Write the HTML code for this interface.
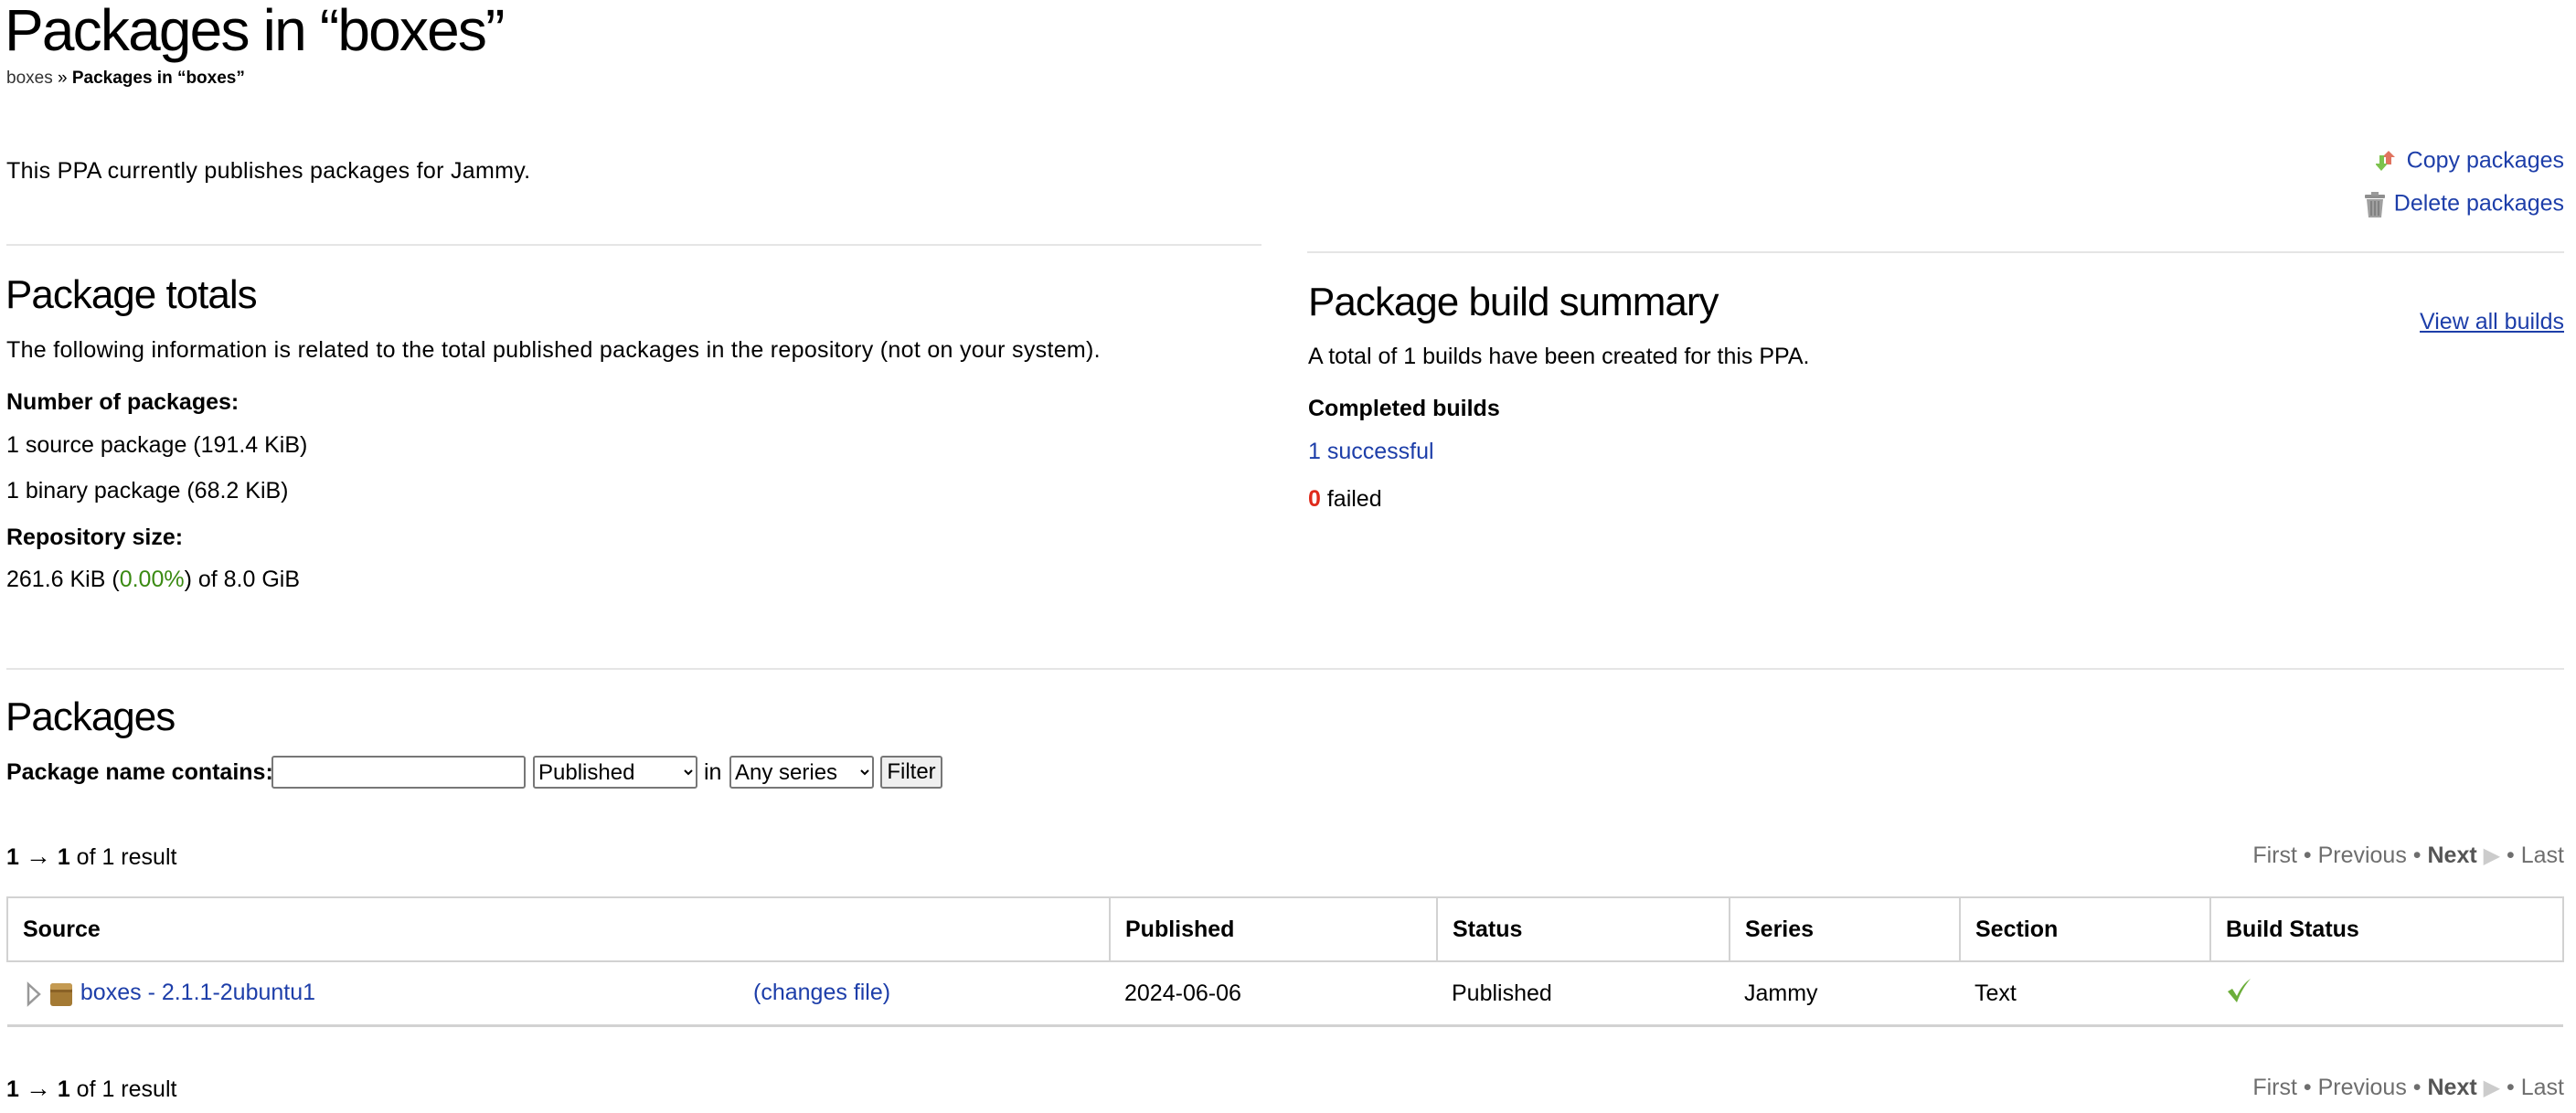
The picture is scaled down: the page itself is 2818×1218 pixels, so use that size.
<!DOCTYPE html>
<html><head><meta charset="utf-8"><style>
body{margin:0;width:2818px;height:1218px;background:#fff;font-family:"Liberation Sans",sans-serif;color:#000;position:relative;overflow:hidden}
.a{position:absolute;white-space:nowrap;font-size:25px;line-height:25px}
.b{font-weight:bold}
.l{color:#1d3ea9}
.h2{font-size:44px;line-height:45px;font-weight:300;letter-spacing:-1px}
.hr{position:absolute;height:2px;background:#e5e5e5}
.g{color:#6e6e6e}
table{position:absolute;left:7px;top:981px;width:2798px;border-collapse:collapse;font-size:25px}
th{text-align:left;height:68px;border:2px solid #d2d2d2;padding:0 0 0 16px;font-weight:bold}
td{height:68px;padding:0 0 0 16px;border-bottom:3px solid #d2d2d2}
input,select,button{font-family:"Liberation Sans",sans-serif;font-size:24px}
.ar{font-size:30px}
</style></head><body>
<div class="a" style="left:5px;top:1px;font-size:64px;line-height:65px;letter-spacing:-1.8px">Packages in “boxes”</div>
<div class="a" style="left:7px;top:76px;font-size:19px;line-height:20px"><span style="color:#333">boxes</span> » <b>Packages in “boxes”</b></div>
<div class="a" style="left:7px;top:175px;letter-spacing:0.3px">This PPA currently publishes packages for Jammy.</div>

<div class="a l" style="right:13px;top:163px"><svg width="26" height="28" viewBox="0 0 26 28" style="vertical-align:middle;margin-right:8px"><path d="M14 2l7 7h-4v8h-6V9H7z" fill="#e0735f"/><path d="M4 7h5v9h4l-7 8-7-8h5z" fill="#7cc24d"/></svg>Copy packages</div>
<div class="a l" style="right:13px;top:209px"><svg width="26" height="30" viewBox="0 0 26 30" style="vertical-align:middle;margin-right:8px"><rect x="2" y="4" width="22" height="4" rx="1" fill="#8f8f8f"/><rect x="9" y="1" width="8" height="4" fill="#9a9a9a"/><path d="M4 9h18l-2 20H6z" fill="#a0a0a0"/><path d="M9 11v16M13 11v16M17 11v16" stroke="#777" stroke-width="1.5"/></svg>Delete packages</div>

<div class="hr" style="left:7px;top:267px;width:1373px"></div>
<div class="hr" style="left:1430px;top:275px;width:1375px"></div>

<div class="a h2" style="left:6px;top:300px">Package totals</div>
<div class="a" style="left:7px;top:371px;letter-spacing:0.3px">The following information is related to the total published packages in the repository (not on your system).</div>
<div class="a b" style="left:7px;top:428px">Number of packages:</div>
<div class="a" style="left:7px;top:475px">1 source package (191.4 KiB)</div>
<div class="a" style="left:7px;top:525px">1 binary package (68.2 KiB)</div>
<div class="a b" style="left:7px;top:576px">Repository size:</div>
<div class="a" style="left:7px;top:622px">261.6 KiB (<span style="color:#3a8a12">0.00%</span>) of 8.0 GiB</div>

<div class="a h2" style="left:1431px;top:308px">Package build summary</div>
<div class="a l" style="right:13px;top:340px;text-decoration:underline">View all builds</div>
<div class="a" style="left:1431px;top:378px">A total of 1 builds have been created for this PPA.</div>
<div class="a b" style="left:1431px;top:435px">Completed builds</div>
<div class="a l" style="left:1431px;top:482px">1 successful</div>
<div class="a" style="left:1431px;top:534px"><b style="color:#df2a1b">0</b> failed</div>

<div class="hr" style="left:7px;top:731px;width:2798px"></div>
<div class="a h2" style="left:6px;top:762px">Packages</div>
<div class="a b" style="left:7px;top:833px">Package name contains:</div>
<input style="position:absolute;left:297px;top:827px;width:278px;height:36px;box-sizing:border-box;border:2px solid #777;border-radius:3px">
<select style="position:absolute;left:583px;top:827px;width:180px;height:36px;border:2px solid #777;border-radius:3px;background:#fff"><option>Published</option></select>
<div class="a" style="left:770px;top:833px">in</div>
<select style="position:absolute;left:798px;top:827px;width:158px;height:36px;border:2px solid #777;border-radius:3px;background:#fff"><option>Any series</option></select>
<button style="position:absolute;left:963px;top:827px;width:68px;height:36px;border:2px solid #777;border-radius:3px;background:#efefef;padding:0">Filter</button>

<div class="a" style="left:7px;top:924px"><b>1</b> <span style="font-size:28px">→</span> <b>1</b> of 1 result</div>
<div class="a g" style="right:13px;top:924px">First • Previous • <b style="color:#555">Next</b> <span style="color:#ccc;font-size:24px">▶</span> • Last</div>

<table>
<tr><th style="width:1188px">Source</th><th style="width:340px">Published</th><th style="width:302px">Status</th><th style="width:234px">Series</th><th style="width:256px">Section</th><th>Build Status</th></tr>
<tr><td style="padding-left:20px;position:relative"><svg width="18" height="28" viewBox="0 0 18 28" style="vertical-align:middle"><path d="M3 3l12 11-12 11z" fill="#fff" stroke="#999" stroke-width="2.5"/></svg> <svg width="28" height="28" viewBox="0 0 28 28" style="vertical-align:middle"><rect x="2" y="2" width="24" height="25" rx="3" fill="#a47a34"/><rect x="2" y="2" width="24" height="8" rx="3" fill="#c49a52"/><rect x="2" y="9" width="24" height="3" fill="#8a6226"/></svg> <span class="l">boxes - 2.1.1-2ubuntu1</span><span class="l" style="position:absolute;left:816px;top:19px">(changes file)</span></td><td>2024-06-06</td><td>Published</td><td>Jammy</td><td>Text</td><td><svg width="30" height="30" viewBox="0 0 30 30"><path d="M3 16l5-3 5 8C17 12 22 6 28 2 22 9 17 17 13 28z" fill="#6cae3a"/></svg></td></tr>
</table>

<div class="a" style="left:7px;top:1178px"><b>1</b> <span style="font-size:28px">→</span> <b>1</b> of 1 result</div>
<div class="a g" style="right:13px;top:1178px">First • Previous • <b style="color:#555">Next</b> <span style="color:#ccc;font-size:24px">▶</span> • Last</div>
</body></html>
